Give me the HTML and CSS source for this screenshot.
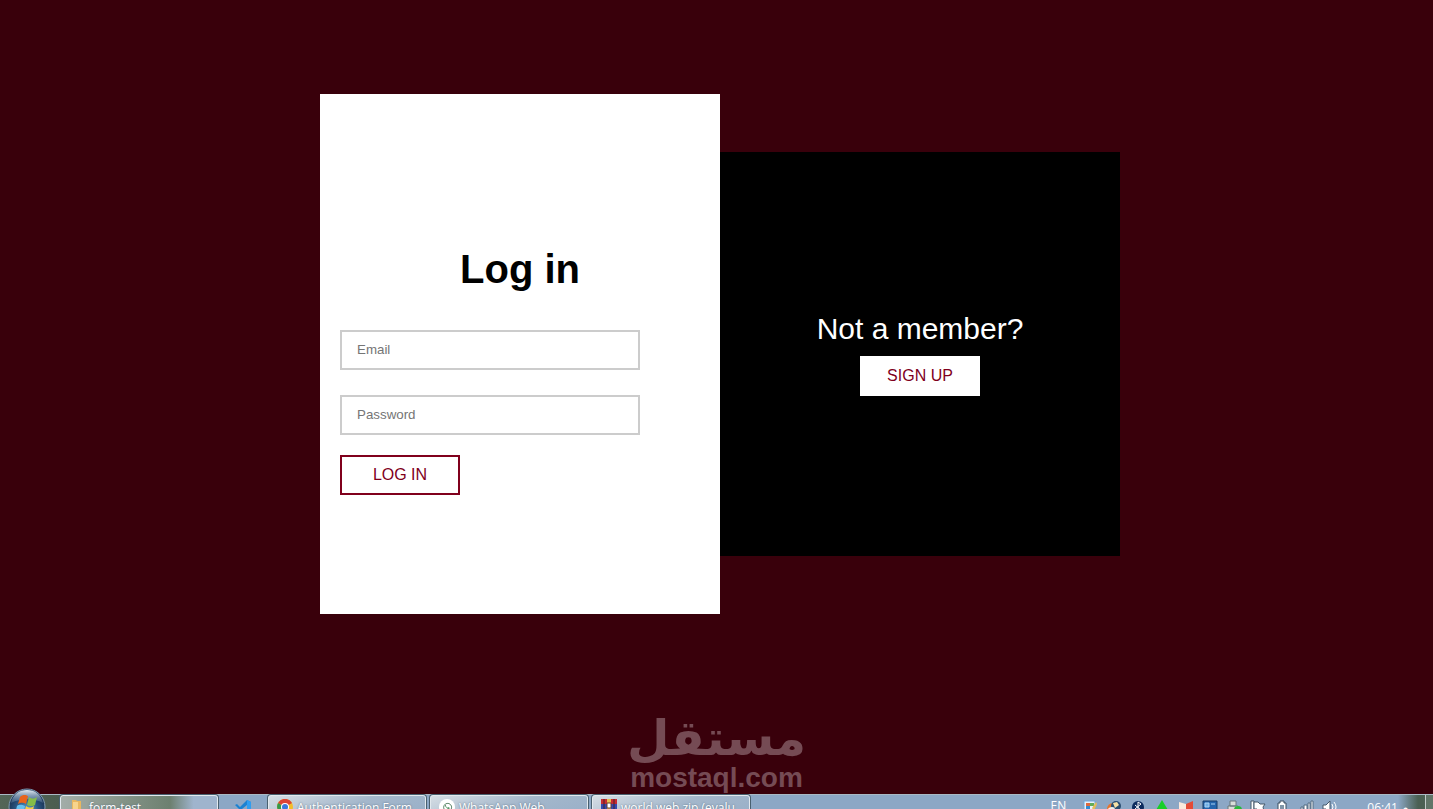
FILE: index.html
```html
<!DOCTYPE html>
<html lang="en">
<head>
    <meta charset="UTF-8">
    <meta name="viewport" content="width=device-width, initial-scale=1.0">
    <title>Authentication Form</title>
    <link rel="stylesheet" href="styles.css">
</head>
<body>
    <main class="stage">
        <form class="login">
            <h1>Log in</h1>
            <input type="email" class="field" placeholder="Email" aria-label="Email">
            <input type="password" class="field" placeholder="Password" aria-label="Password">
            <button type="button" class="btn btn-login">LOG IN</button>
        </form>
        <section class="signup">
            <p>Not a member?</p>
            <button type="button" class="btn btn-signup">SIGN UP</button>
        </section>
    </main>

    <div class="brand">
        <span class="brand-ar" lang="ar" dir="rtl">مستقل</span>
        <span class="brand-en">mostaql.com</span>
    </div>

    <footer class="taskbar">
        <button class="start" aria-label="Start">
            <svg width="38" height="38" viewBox="0 0 38 38">
                <defs>
                    <radialGradient id="orb" cx="50%" cy="60%" r="55%">
                        <stop offset="0" stop-color="#5fa8d8"/>
                        <stop offset="0.6" stop-color="#28537f"/>
                        <stop offset="1" stop-color="#1a3152"/>
                    </radialGradient>
                    <linearGradient id="shine" x1="0" y1="0" x2="0" y2="1">
                        <stop offset="0" stop-color="#e4edf4"/>
                        <stop offset="1" stop-color="#7192b4" stop-opacity="0.3"/>
                    </linearGradient>
                </defs>
                <circle cx="19" cy="19" r="18" fill="url(#orb)" stroke="#7e9bb4"/>
                <path d="M3 15C5 6 11 2 19 2s14 4 16 13c-9-5-22-5-32 0z" fill="url(#shine)"/>
                <path d="M12 9c3-3 6-2 8-1l-2 8c-3-2-6-1-8 0z" fill="#e8641c"/>
                <path d="M21 9c3 2 5 2 8 0l-2 8c-3 2-6 1-8 0z" fill="#86bd48"/>
                <path d="M9 18c3-2 5-1 8 0l-2 8c-3-2-5-2-8 0z" fill="#66c0ef"/>
                <path d="M18 18c3 2 5 2 8 0l-2 8c-3 2-5 2-8 0z" fill="#f8cd42"/>
            </svg>
        </button>

        <button class="task task-folder">
            <svg width="16" height="16" viewBox="0 0 16 16"><path d="M3 1h4l1 1h4v14H3z" fill="#e9b75f"/><path d="M4 3h5v13H4z" fill="#f7d48c"/></svg>
            form-test
        </button>
        <button class="task-code" aria-label="Visual Studio Code">
            <svg width="18" height="18" viewBox="0 0 18 18"><path d="M13 0l4 2v14l-4 2-7-7-3 3-2-1 4-4-4-4 2-1 3 3zM13 5L8 9l5 4z" fill="#1c82d2"/><path d="M13 0l4 2v14l-4 2z" fill="#2f9df0"/></svg>
        </button>
        <button class="task">
            <svg width="16" height="16" viewBox="0 0 16 16"><circle cx="8" cy="8" r="8" fill="#f2bd2b"/><path d="M8 8L1 4a8 8 0 0 1 14 0z" fill="#dc4434"/><path d="M8 8L1 4a8 8 0 0 0 4 11z" fill="#34984b"/><circle cx="8" cy="8" r="4" fill="#fff"/><circle cx="8" cy="8" r="3" fill="#3878dc"/></svg>
            Authentication Form
        </button>
        <button class="task">
            <svg width="16" height="16" viewBox="0 0 16 16"><circle cx="8" cy="8" r="8" fill="#fff"/><path d="M4 12l1-2a4 4 0 1 1 2 2z" fill="none" stroke="#5c8468"/><path d="M6 6c0 2 2 4 4 4l1-1-2-1-1 1-1-2 0-1z" fill="#4c8f5e"/></svg>
            WhatsApp Web
        </button>
        <button class="task">
            <svg width="16" height="16" viewBox="0 0 16 16"><path fill="#c72b32" d="M0 0h16v5H0z"/><path fill="#3549b0" d="M0 5h16v5H0z"/><path fill="#347b43" d="M0 10h16v6H0z"/><path fill="#e7bd50" d="M6 0h4v16H6z"/><path d="M3 0v16M13 0v16" stroke="#40202d"/><path d="M6 4h4v5H6z" fill="#fff" stroke="#693e30"/></svg>
            world web.zip (evalu
        </button>

        <div class="tray">
            <span class="lang">EN</span>
            <svg viewBox="0 0 16 16"><path d="M2 1h11v10H2z" fill="#e8f2fb" stroke="#6da7db"/><path d="M4 3h4v3H4z" fill="#dc6a3f"/><path d="M8 3h4v3H8z" fill="#62ad59"/><path d="M4 6h4v4H4z" fill="#338bd2"/><path d="M10 8l4-6 1 2-3 7z" fill="#e5bd58"/></svg>
            <svg viewBox="0 0 16 16"><circle cx="7" cy="9" r="6" fill="#e7742e"/><circle cx="10" cy="6" r="5" fill="#294c70"/><path d="M7 3l4-1 2 3-4 3z" fill="#f4dfa4"/><path d="M1 10c2-3 5-4 8-2l-3 5z" fill="#eef1ef"/></svg>
            <svg viewBox="0 0 16 16"><circle cx="8" cy="7" r="6" fill="#0d2b5d"/><path d="M5 5l6 5-3 2V2l3 2-6 5" fill="none" stroke="#fff"/></svg>
            <svg viewBox="0 0 16 16"><path d="M8 0l6 10H2z" fill="#18cf28"/></svg>
            <svg viewBox="0 0 16 16"><path d="M1 2l7 2v11l-7-2z" fill="#fbe9dc"/><path d="M8 4l7-3v12l-7 3z" fill="#e44b36"/></svg>
            <svg viewBox="0 0 16 16"><path d="M1 1h14v11H1z" fill="#2465ad" stroke="#173c69"/><path d="M3 3h4v4H3zM9 4h4" fill="#70b0e6" stroke="#a9d4f5"/></svg>
            <svg viewBox="0 0 16 16"><path d="M4 1h6v5H4zM2 6h10v5H2z" fill="#d8ddd9" stroke="#69777a"/><circle cx="12" cy="10" r="4" fill="#28b83a"/></svg>
            <svg viewBox="0 0 16 16"><path d="M1 1h3v14H1z" fill="#fff" stroke="#46596b"/><path d="M4 2h4l2 2h5l-2 3 1 4H9L7 9H4z" fill="#fff" stroke="#46596b"/></svg>
            <svg viewBox="0 0 16 16"><path d="M4 3h2V1h4v2h2v12H4z" fill="#fff" stroke="#394c5f"/><path d="M6 5h4v8H6z" fill="#8095a7"/></svg>
            <svg viewBox="0 0 16 16"><path d="M3 7h2v8H3zM6 5h3v10H6zM10 3h2v12h-2zM13 1h2v14h-2z" fill="#fff" stroke="#536a80"/></svg>
            <svg viewBox="0 0 16 16"><path d="M1 5h3l4-4v12l-4-4H1z" fill="#fff" stroke="#46596b"/><path d="M10 4q2 3 0 6M12 2q4 5 0 10" fill="none" stroke="#fff"/></svg>
            <span class="clock">06:41 م</span>
        </div>
        <button class="show-desktop" aria-label="Show desktop"></button>
    </footer>
</body>
</html>
```

FILE: styles.css
```css
* {
    box-sizing: border-box;
}

body {
    display: flex;
    flex-direction: column;
    height: 100vh;
    margin: 0;
    overflow: hidden;
    background-color: #39000b;
    font-family: "Liberation Sans", Arial, sans-serif;
}

.stage {
    flex: 1;
    display: flex;
    align-items: center;
    justify-content: center;
    padding-left: 7px;
}

.login,
.signup {
    display: flex;
    flex-direction: column;
    width: 100%;
    max-width: 400px;
    padding: 20px;
}

.login {
    justify-content: center;
    align-items: flex-start;
    min-height: 520px;
    background-color: #fff;
}

.login h1 {
    align-self: center;
    margin: 33px 0 38px;
    font-size: 40px;
    line-height: 46px;
    color: #000;
}

.field {
    width: 300px;
    max-width: 100%;
    height: 40px;
    margin: 0 0 25px;
    padding: 0 15px 2px;
    border: 2px solid #ccc;
    font-family: inherit;
    outline: none;
}

.field::placeholder {
    color: #757575;
}

.field + .field {
    margin-bottom: 20px;
}

.signup {
    align-items: center;
    justify-content: center;
    gap: 10px;
    min-height: 404px;
    background-color: #000;
    color: #fff;
}

.signup p {
    margin: 0;
    font-size: 30px;
    line-height: 34px;
}

.btn {
    width: 120px;
    height: 40px;
    padding: 0;
    background-color: #fff;
    color: #80001c;
    font-family: inherit;
    font-size: 16px;
    cursor: pointer;
}

.btn-login {
    border: 2px solid #80001c;
}

.btn-signup {
    border: none;
}

/* brand */
.brand {
    display: flex;
    flex-direction: column;
    align-items: center;
    height: 86px;
    padding-top: 4px;
    color: #754b54;
    font-weight: bold;
}

.brand-ar {
    font-family: "DejaVu Sans", sans-serif;
    font-size: 49px;
    line-height: 54px;
}

.brand-en {
    font-size: 28px;
    line-height: 24px;
}

/* taskbar */
.taskbar {
    display: flex;
    align-items: flex-start;
    height: 15px;
    background: linear-gradient(to right, #536557 0, #4b5d50 60px, #8ca7c5 200px, #8ca7c5 calc(100% - 35px), #4b6053 calc(100% - 15px));
    border-top: 1px solid #a9b9c4;
    font-family: "Open Sans", sans-serif;
    font-size: 12px;
    color: #fff;
}

.taskbar button {
    border: none;
    padding: 0;
    background: none;
    font: inherit;
    color: inherit;
}

.taskbar svg {
    flex: none;
}

.taskbar .start {
    width: 60px;
    height: 38px;
    margin-top: -7px;
}

.start svg {
    display: block;
    margin-left: 8px;
}

.taskbar .task {
    display: flex;
    align-items: center;
    gap: 4px;
    width: 158px;
    height: 24px;
    margin-right: 4px;
    padding-left: 8px;
    border: 1px solid #e2e9ee;
    border-radius: 3px;
    background: linear-gradient(160deg, #d5dde4, #a4b7cb 50%, #98afc8);
    box-shadow: 0 0 0 1px #49606f;
    white-space: nowrap;
    text-shadow: 0 0 2px #52687c;
}

.taskbar .task-folder {
    margin-right: 0;
    background: linear-gradient(to right, #a3ada8, #6d8070 70%, #9fb4cd 85%);
}

.taskbar .task-code {
    width: 50px;
    height: 28px;
}

.task-code svg {
    display: block;
    margin: 0 auto;
}

.tray {
    display: flex;
    align-items: flex-start;
    gap: 8px;
    margin-left: auto;
    padding-right: 17px;
}

.tray svg {
    width: 16px;
    height: 16px;
    margin-top: 5px;
}

.lang {
    margin-right: 8px;
    line-height: 22px;
}

.clock {
    margin-left: 21px;
    line-height: 26px;
    white-space: nowrap;
    direction: ltr;
}

.taskbar .show-desktop {
    width: 8px;
    height: 30px;
    border-left: 1px solid #c1cbc9;
    background-color: #617568;
}
```
